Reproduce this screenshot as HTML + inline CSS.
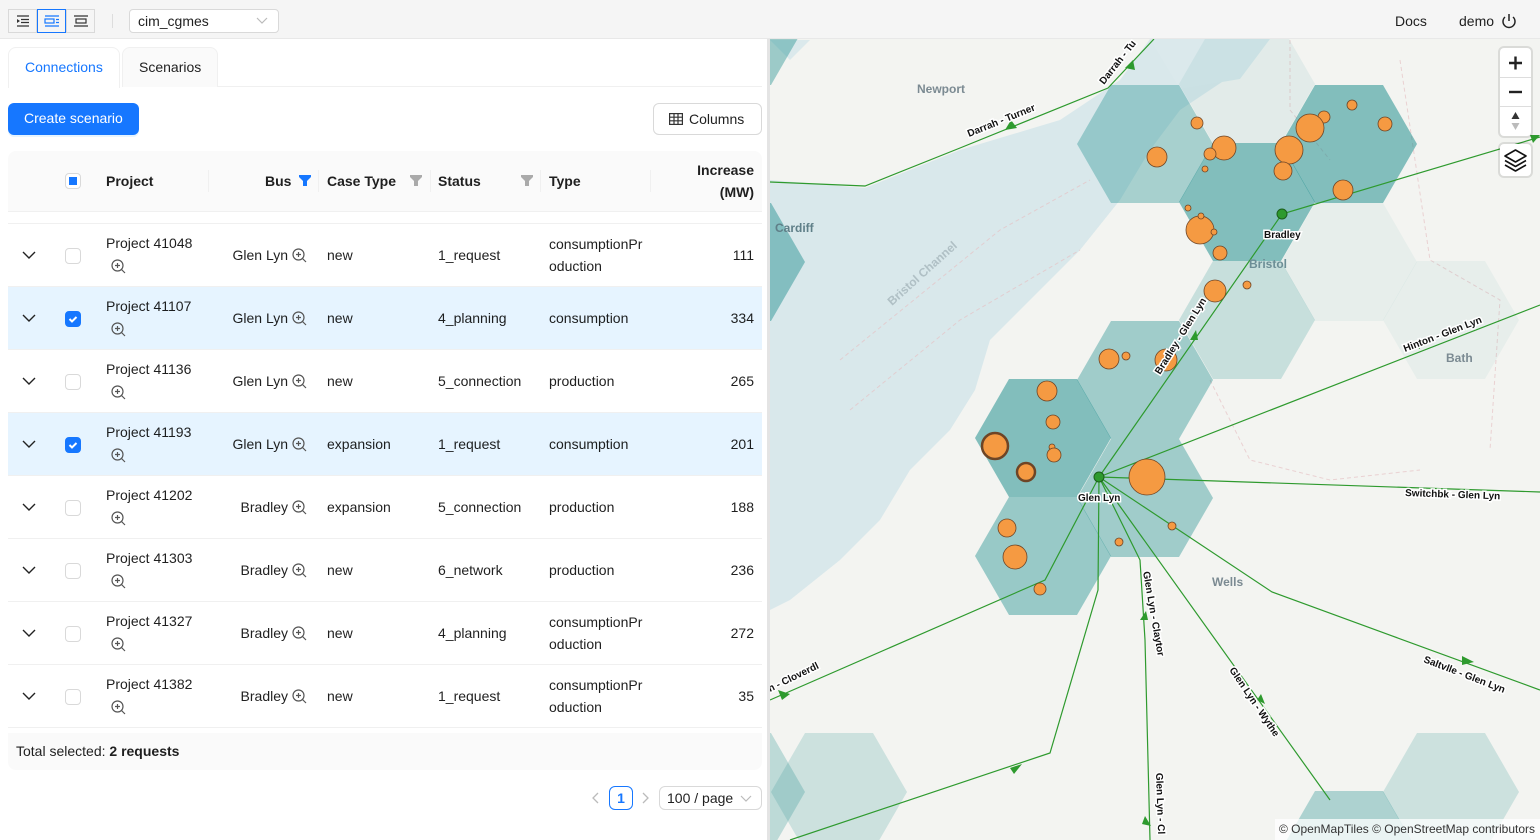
<!DOCTYPE html>
<html style="overflow:hidden"><head><meta charset="utf-8"><style>
*{box-sizing:border-box;margin:0;padding:0}
body{width:1540px;height:840px;overflow:hidden;font-family:"Liberation Sans",sans-serif;font-size:14px;color:rgba(0,0,0,.88);background:#fff;position:relative}
.top{position:absolute;left:0;top:0;width:1540px;height:39px;background:#f5f5f5;border-bottom:1px solid #e8e8e8}
.ib{position:absolute;top:9px;width:29px;height:24px;border:1px solid #d9d9d9;background:#f5f5f5}
.sel{position:absolute;left:129px;top:9px;width:150px;height:24px;border:1px solid #d9d9d9;border-radius:4px;background:#fff;padding:3px 8px;font-size:14px}
.abs{position:absolute}
.left{position:absolute;left:0;top:39px;width:768px;height:801px;background:#fff;overflow:hidden}
.tab{position:absolute;top:8px;height:40px;border:1px solid #f0f0f0;border-bottom:none;border-radius:8px 8px 0 0;padding:12px 16px;font-size:14px}
.th{position:absolute;top:112px;left:8px;width:754px;height:61px;background:#fafafa;border-radius:8px 8px 0 0;border-bottom:1px solid #f0f0f0;font-weight:bold}
.th span{position:absolute}
.dv{position:absolute;top:19px;width:1px;height:22px;background:#f0f0f0}
.row{position:absolute;left:8px;width:754px;height:63px;border-bottom:1px solid #f0f0f0}
.row.s{background:#e6f4ff}
.row span{position:absolute}
.cb{position:absolute;left:57px;top:24px;width:16px;height:16px;border:1px solid #d9d9d9;border-radius:4px;background:#fff}
.cb.on{background:#1677ff;border-color:#1677ff}
.chev{position:absolute;left:14px;top:26px}
</style></head><body>
<div class="top">
 <div class="ib" style="left:8px"><svg width="27" height="22"><g stroke="#333" stroke-width="1.2"><path d="M8 6h12M12 9.5h8M12 12.5h8M8 16h12"/></g><path d="M8 9l3 2-3 2z" fill="#333"/></svg></div>
 <div class="ib" style="left:37px;border-color:#1677ff;background:#f5f5f5"><svg width="27" height="22"><g stroke="#1677ff" stroke-width="1.2" fill="none"><path d="M7 6h14M7 16h14"/><rect x="7" y="9" width="9" height="4"/><path d="M18 9.5h3M18 12.5h3"/></g></svg></div>
 <div class="ib" style="left:66px"><svg width="27" height="22"><g stroke="#333" stroke-width="1.2" fill="none"><path d="M7 6h14M7 16h14"/><rect x="9" y="9" width="10" height="4"/></g></svg></div>
 <div class="abs" style="left:112px;top:14px;width:1px;height:14px;background:#ddd"></div>
 <div class="sel">cim_cgmes<svg class="abs" style="left:126px;top:6px" width="12" height="10"><path d="M1 2l5 5 5-5" stroke="#bbb" fill="none" stroke-width="1.2"/></svg></div>
 <div class="abs" style="left:1395px;top:13px">Docs</div>
 <div class="abs" style="left:1459px;top:13px">demo</div>
 <svg class="abs" style="left:1500px;top:12px" width="18" height="18"><path d="M5 5a6 6 0 1 0 8 0" stroke="#222" stroke-width="1.5" fill="none"/><path d="M9 2v7" stroke="#222" stroke-width="1.5"/></svg>
</div>

<div class="left">
 <div class="tab" style="left:8px;width:112px;color:#1677ff;background:#fff;height:41px;padding-top:11px">Connections</div>
 <div class="tab" style="left:122px;width:96px;background:#fafafa;padding-top:11px">Scenarios</div>
 <div class="abs" style="left:218px;top:47px;width:544px;height:1px;background:#f0f0f0"></div>
 <div class="abs" style="left:8px;top:64px;width:131px;height:32px;background:#1677ff;border-radius:6px;color:#fff;padding:7px 16px;box-shadow:0 2px 0 rgba(5,145,255,.1)">Create scenario</div>
 <div class="abs" style="left:653px;top:64px;width:109px;height:32px;border:1px solid #d9d9d9;border-radius:6px;padding:7px 0 0 15px"><svg width="14" height="12" style="vertical-align:-1px;margin-right:6px"><g stroke="#333" stroke-width="1.2" fill="none"><rect x=".6" y=".6" width="12.8" height="10.8"/><path d="M.6 4.2h12.8M.6 7.8h12.8M5 .6v10.8M9 .6v10.8"/></g></svg>Columns</div>
 <div class="th">
  <div style="position:absolute;left:57px;top:22px;width:16px;height:16px;border:1px solid #d9d9d9;border-radius:4px;background:#fff"><div style="margin:3px;width:8px;height:8px;background:#1677ff"></div></div>
  <span style="left:98px;top:22px">Project</span>
  <div class="dv" style="left:200px"></div>
  <span style="left:257px;top:22px">Bus</span>
  <svg class="abs" style="left:291px;top:24px" width="12" height="11"><path d="M0 0h12v2l-4 4v5h-4v-5l-4-4z" fill="#1677ff"/></svg>
  <div class="dv" style="left:310px"></div>
  <span style="left:319px;top:22px">Case Type</span>
  <svg class="abs" style="left:402px;top:24px" width="12" height="11"><path d="M0 0h12v2l-4 4v5h-4v-5l-4-4z" fill="#aaa"/></svg>
  <div class="dv" style="left:422px"></div>
  <span style="left:430px;top:22px">Status</span>
  <svg class="abs" style="left:513px;top:24px" width="12" height="11"><path d="M0 0h12v2l-4 4v5h-4v-5l-4-4z" fill="#aaa"/></svg>
  <div class="dv" style="left:532px"></div>
  <span style="left:541px;top:22px">Type</span>
  <div class="dv" style="left:642px"></div>
  <span style="right:8px;top:8px;text-align:right;line-height:22px">Increase<br>(MW)</span>
 </div>
 <div class="abs" style="left:8px;top:184px;width:754px;height:1px;background:#f0f0f0"></div>

 <div class="row" style="top:185px"><svg class="chev" width="14" height="10"><path d="M1 2l6 6 6-6" stroke="#222" fill="none" stroke-width="1.4"/></svg><div class="cb"></div><span style="left:98px;top:11px">Project 41048</span><svg class="abs" style="left:103px;top:35px" width="15" height="15"><circle cx="6.5" cy="6.5" r="5.5" stroke="#555" fill="none" stroke-width="1.2"/><path d="M10.5 10.5l3.5 3.5M4 6.5h5M6.5 4v5" stroke="#555" stroke-width="1.2"/></svg><span style="right:474px;top:23px">Glen Lyn</span><svg class="abs" style="left:284px;top:24px" width="15" height="15"><circle cx="6.5" cy="6.5" r="5.5" stroke="#555" fill="none" stroke-width="1.2"/><path d="M10.5 10.5l3.5 3.5M4 6.5h5M6.5 4v5" stroke="#555" stroke-width="1.2"/></svg><span style="left:319px;top:23px">new</span><span style="left:430px;top:23px">1_request</span><span style="left:541px;top:9px;line-height:22px">consumptionPr<br>oduction</span><span style="right:8px;top:23px">111</span></div>

 <div class="row s" style="top:248px"><svg class="chev" width="14" height="10"><path d="M1 2l6 6 6-6" stroke="#222" fill="none" stroke-width="1.4"/></svg><div class="cb on"><svg width="14" height="14"><path d="M3.5 7l2.5 2.5 4.5-4.5" stroke="#fff" stroke-width="2" fill="none"/></svg></div><span style="left:98px;top:11px">Project 41107</span><svg class="abs" style="left:103px;top:35px" width="15" height="15"><circle cx="6.5" cy="6.5" r="5.5" stroke="#555" fill="none" stroke-width="1.2"/><path d="M10.5 10.5l3.5 3.5M4 6.5h5M6.5 4v5" stroke="#555" stroke-width="1.2"/></svg><span style="right:474px;top:23px">Glen Lyn</span><svg class="abs" style="left:284px;top:24px" width="15" height="15"><circle cx="6.5" cy="6.5" r="5.5" stroke="#555" fill="none" stroke-width="1.2"/><path d="M10.5 10.5l3.5 3.5M4 6.5h5M6.5 4v5" stroke="#555" stroke-width="1.2"/></svg><span style="left:319px;top:23px">new</span><span style="left:430px;top:23px">4_planning</span><span style="left:541px;top:23px">consumption</span><span style="right:8px;top:23px">334</span></div>

 <div class="row" style="top:311px"><svg class="chev" width="14" height="10"><path d="M1 2l6 6 6-6" stroke="#222" fill="none" stroke-width="1.4"/></svg><div class="cb"></div><span style="left:98px;top:11px">Project 41136</span><svg class="abs" style="left:103px;top:35px" width="15" height="15"><circle cx="6.5" cy="6.5" r="5.5" stroke="#555" fill="none" stroke-width="1.2"/><path d="M10.5 10.5l3.5 3.5M4 6.5h5M6.5 4v5" stroke="#555" stroke-width="1.2"/></svg><span style="right:474px;top:23px">Glen Lyn</span><svg class="abs" style="left:284px;top:24px" width="15" height="15"><circle cx="6.5" cy="6.5" r="5.5" stroke="#555" fill="none" stroke-width="1.2"/><path d="M10.5 10.5l3.5 3.5M4 6.5h5M6.5 4v5" stroke="#555" stroke-width="1.2"/></svg><span style="left:319px;top:23px">new</span><span style="left:430px;top:23px">5_connection</span><span style="left:541px;top:23px">production</span><span style="right:8px;top:23px">265</span></div>

 <div class="row s" style="top:374px"><svg class="chev" width="14" height="10"><path d="M1 2l6 6 6-6" stroke="#222" fill="none" stroke-width="1.4"/></svg><div class="cb on"><svg width="14" height="14"><path d="M3.5 7l2.5 2.5 4.5-4.5" stroke="#fff" stroke-width="2" fill="none"/></svg></div><span style="left:98px;top:11px">Project 41193</span><svg class="abs" style="left:103px;top:35px" width="15" height="15"><circle cx="6.5" cy="6.5" r="5.5" stroke="#555" fill="none" stroke-width="1.2"/><path d="M10.5 10.5l3.5 3.5M4 6.5h5M6.5 4v5" stroke="#555" stroke-width="1.2"/></svg><span style="right:474px;top:23px">Glen Lyn</span><svg class="abs" style="left:284px;top:24px" width="15" height="15"><circle cx="6.5" cy="6.5" r="5.5" stroke="#555" fill="none" stroke-width="1.2"/><path d="M10.5 10.5l3.5 3.5M4 6.5h5M6.5 4v5" stroke="#555" stroke-width="1.2"/></svg><span style="left:319px;top:23px">expansion</span><span style="left:430px;top:23px">1_request</span><span style="left:541px;top:23px">consumption</span><span style="right:8px;top:23px">201</span></div>

 <div class="row" style="top:437px"><svg class="chev" width="14" height="10"><path d="M1 2l6 6 6-6" stroke="#222" fill="none" stroke-width="1.4"/></svg><div class="cb"></div><span style="left:98px;top:11px">Project 41202</span><svg class="abs" style="left:103px;top:35px" width="15" height="15"><circle cx="6.5" cy="6.5" r="5.5" stroke="#555" fill="none" stroke-width="1.2"/><path d="M10.5 10.5l3.5 3.5M4 6.5h5M6.5 4v5" stroke="#555" stroke-width="1.2"/></svg><span style="right:474px;top:23px">Bradley</span><svg class="abs" style="left:284px;top:24px" width="15" height="15"><circle cx="6.5" cy="6.5" r="5.5" stroke="#555" fill="none" stroke-width="1.2"/><path d="M10.5 10.5l3.5 3.5M4 6.5h5M6.5 4v5" stroke="#555" stroke-width="1.2"/></svg><span style="left:319px;top:23px">expansion</span><span style="left:430px;top:23px">5_connection</span><span style="left:541px;top:23px">production</span><span style="right:8px;top:23px">188</span></div>

 <div class="row" style="top:500px"><svg class="chev" width="14" height="10"><path d="M1 2l6 6 6-6" stroke="#222" fill="none" stroke-width="1.4"/></svg><div class="cb"></div><span style="left:98px;top:11px">Project 41303</span><svg class="abs" style="left:103px;top:35px" width="15" height="15"><circle cx="6.5" cy="6.5" r="5.5" stroke="#555" fill="none" stroke-width="1.2"/><path d="M10.5 10.5l3.5 3.5M4 6.5h5M6.5 4v5" stroke="#555" stroke-width="1.2"/></svg><span style="right:474px;top:23px">Bradley</span><svg class="abs" style="left:284px;top:24px" width="15" height="15"><circle cx="6.5" cy="6.5" r="5.5" stroke="#555" fill="none" stroke-width="1.2"/><path d="M10.5 10.5l3.5 3.5M4 6.5h5M6.5 4v5" stroke="#555" stroke-width="1.2"/></svg><span style="left:319px;top:23px">new</span><span style="left:430px;top:23px">6_network</span><span style="left:541px;top:23px">production</span><span style="right:8px;top:23px">236</span></div>

 <div class="row" style="top:563px"><svg class="chev" width="14" height="10"><path d="M1 2l6 6 6-6" stroke="#222" fill="none" stroke-width="1.4"/></svg><div class="cb"></div><span style="left:98px;top:11px">Project 41327</span><svg class="abs" style="left:103px;top:35px" width="15" height="15"><circle cx="6.5" cy="6.5" r="5.5" stroke="#555" fill="none" stroke-width="1.2"/><path d="M10.5 10.5l3.5 3.5M4 6.5h5M6.5 4v5" stroke="#555" stroke-width="1.2"/></svg><span style="right:474px;top:23px">Bradley</span><svg class="abs" style="left:284px;top:24px" width="15" height="15"><circle cx="6.5" cy="6.5" r="5.5" stroke="#555" fill="none" stroke-width="1.2"/><path d="M10.5 10.5l3.5 3.5M4 6.5h5M6.5 4v5" stroke="#555" stroke-width="1.2"/></svg><span style="left:319px;top:23px">new</span><span style="left:430px;top:23px">4_planning</span><span style="left:541px;top:9px;line-height:22px">consumptionPr<br>oduction</span><span style="right:8px;top:23px">272</span></div>

 <div class="row" style="top:626px"><svg class="chev" width="14" height="10"><path d="M1 2l6 6 6-6" stroke="#222" fill="none" stroke-width="1.4"/></svg><div class="cb"></div><span style="left:98px;top:11px">Project 41382</span><svg class="abs" style="left:103px;top:35px" width="15" height="15"><circle cx="6.5" cy="6.5" r="5.5" stroke="#555" fill="none" stroke-width="1.2"/><path d="M10.5 10.5l3.5 3.5M4 6.5h5M6.5 4v5" stroke="#555" stroke-width="1.2"/></svg><span style="right:474px;top:23px">Bradley</span><svg class="abs" style="left:284px;top:24px" width="15" height="15"><circle cx="6.5" cy="6.5" r="5.5" stroke="#555" fill="none" stroke-width="1.2"/><path d="M10.5 10.5l3.5 3.5M4 6.5h5M6.5 4v5" stroke="#555" stroke-width="1.2"/></svg><span style="left:319px;top:23px">new</span><span style="left:430px;top:23px">1_request</span><span style="left:541px;top:9px;line-height:22px">consumptionPr<br>oduction</span><span style="right:8px;top:23px">35</span></div>

 <div class="abs" style="left:8px;top:694px;width:754px;height:37px;background:#fafafa;border-radius:0 0 8px 8px;padding:10px 8px">Total selected: <b>2 requests</b></div>
 <svg class="abs" style="left:591px;top:753px" width="10" height="12"><path d="M7 1l-5 5 5 5" stroke="#bbb" fill="none" stroke-width="1.3"/></svg>
 <div class="abs" style="left:609px;top:747px;width:24px;height:24px;border:1px solid #1677ff;border-radius:6px;color:#1677ff;font-weight:bold;text-align:center;line-height:22px">1</div>
 <svg class="abs" style="left:640px;top:753px" width="10" height="12"><path d="M3 1l5 5-5 5" stroke="#bbb" fill="none" stroke-width="1.3"/></svg>
 <div class="abs" style="left:659px;top:747px;width:103px;height:24px;border:1px solid #d9d9d9;border-radius:6px;padding:3px 7px">100 / page<svg class="abs" style="left:80px;top:7px" width="12" height="10"><path d="M1 2l5 5 5-5" stroke="#bbb" fill="none" stroke-width="1.2"/></svg></div>
</div>
<div class="abs" style="left:767px;top:39px;width:3px;height:801px;background:#e4e4e4"></div>

<svg class="abs" style="left:770px;top:39px;overflow:hidden" width="770" height="801" viewBox="770 39 770 801" font-family="Liberation Sans, sans-serif">
 <rect x="770" y="39" width="770" height="801" fill="#f3f4f1"/>
 <path d="M770 180L865 188L960 150L1060 120L1120 80L1150 39L1250 39L1240 70L1180 110L1150 150L1120 200L1080 250L1030 300L990 340L975 390L950 430L910 470L880 520L840 560L790 600L770 610Z" fill="#d9e8eb"/>
 <path d="M770 40h40l-20 20zM1150 39h120l-30 40-60 10z" fill="#dbe9ec"/>
 <g fill="none" stroke="#e5c2c5" stroke-width="1" stroke-dasharray="4 3" opacity=".7">
  <path d="M840 360L1000 230L1090 180M850 410L960 320L1080 250M1290 40L1290 110L1330 160M1400 60L1430 260L1500 300L1490 450M1210 380L1250 460L1330 480L1420 470"/>
 </g>
 <g fill="#1a8c8c">
  <polygon fill-opacity=".05" points="1281,262 1315,203 1383,203 1417,262 1383,321 1315,321"/>
  <polygon fill-opacity=".05" points="1383,320 1417,261 1485,261 1519,320 1485,379 1417,379"/>
  <polygon fill-opacity=".08" points="1179,84 1213,25 1281,25 1315,84 1281,143 1213,143"/>
  <polygon fill-opacity=".35" points="1077,144 1111,85 1179,85 1213,144 1179,203 1111,203"/>
  <polygon fill-opacity=".52" points="1281,144 1315,85 1383,85 1417,144 1383,203 1315,203"/>
  <polygon fill-opacity=".52" points="1179,202 1213,143 1281,143 1315,202 1281,261 1213,261"/>
  <polygon fill-opacity=".2" points="1179,320 1213,261 1281,261 1315,320 1281,379 1213,379"/>
  <polygon fill-opacity=".38" points="1077,380 1111,321 1179,321 1213,380 1179,439 1111,439"/>
  <polygon fill-opacity=".52" points="975,438 1009,379 1077,379 1111,438 1077,497 1009,497"/>
  <polygon fill-opacity=".38" points="1077,498 1111,439 1179,439 1213,498 1179,557 1111,557"/>
  <polygon fill-opacity=".42" points="975,556 1009,497 1077,497 1111,556 1077,615 1009,615"/>
  <polygon fill-opacity=".45" points="669,262 703,203 771,203 805,262 771,321 703,321"/>
  <polygon fill-opacity=".4" points="669,26 703,-33 771,-33 805,26 771,85 703,85"/>
  <polygon fill-opacity=".18" points="1383,792 1417,733 1485,733 1519,792 1485,851 1417,851"/>
  <polygon fill-opacity=".32" points="1281,850 1315,791 1383,791 1417,850 1383,909 1315,909"/>
  <polygon fill-opacity=".18" points="771,792 805,733 873,733 907,792 873,851 805,851"/>
  <polygon fill-opacity=".25" points="669,792 703,733 771,733 805,792 771,851 703,851"/>
 </g>
 <g fill="none" stroke="#2e9a2e" stroke-width="1.2">
  <path d="M770 182L865 186L960 148L1108 88L1154 39"/>
  <path d="M1099 477L1282 214L1540 137"/>
  <path d="M1099 477L1540 305"/>
  <path d="M1099 477L1540 492"/>
  <path d="M1099 477L1272 592L1540 690"/>
  <path d="M1099 477L1330 800"/>
  <path d="M1099 477L1140 560L1145 640L1150 840"/>
  <path d="M1099 477L1098 590L1050 753L790 840"/>
  <path d="M1099 477L1045 580L770 700"/>
 </g>
 <g fill="#2e9a2e">
  <path d="M1005 130l12 -2-6-8z"/><path d="M1125 68l8 -8 2 10z"/><path d="M1410 345l10-6 0 10z"/><path d="M1465 490l10 3-10 4z"/><path d="M1462 656l12 6-12 3z"/><path d="M1257 700l8 4-4 -10z"/><path d="M1140 620l6-9 2 9z"/><path d="M1010 768l12-4-8 10z"/><path d="M778 690l12 4-8 6z"/><path d="M1145 816l6 10-9-2z"/><path d="M1190 340l6-10 2 10z"/><path d="M1530 135l10 0-7 8z"/>
 </g>
 <g fill="#f59a42" stroke="#6e4526" stroke-width=".8">
  <circle cx="1324" cy="117" r="6"/><circle cx="1352" cy="105" r="5"/><circle cx="1310" cy="128" r="14"/><circle cx="1385" cy="124" r="7"/><circle cx="1197" cy="123" r="6"/><circle cx="1224" cy="148" r="12"/><circle cx="1210" cy="154" r="6"/><circle cx="1157" cy="157" r="10"/><circle cx="1289" cy="150" r="14"/><circle cx="1283" cy="171" r="9"/><circle cx="1343" cy="190" r="10"/><circle cx="1205" cy="169" r="3"/><circle cx="1188" cy="208" r="3"/><circle cx="1200" cy="230" r="14"/><circle cx="1201" cy="216" r="3"/><circle cx="1214" cy="232" r="3"/><circle cx="1220" cy="253" r="7"/><circle cx="1215" cy="291" r="11"/><circle cx="1247" cy="285" r="4"/><circle cx="1109" cy="359" r="10"/><circle cx="1126" cy="356" r="4"/><circle cx="1166" cy="360" r="11"/><circle cx="1047" cy="391" r="10"/><circle cx="1053" cy="422" r="7"/><circle cx="1052" cy="447" r="3"/><circle cx="1054" cy="455" r="7"/><circle cx="1147" cy="477" r="18"/><circle cx="1007" cy="528" r="9"/><circle cx="1015" cy="557" r="12"/><circle cx="1172" cy="526" r="4"/><circle cx="1119" cy="542" r="4"/><circle cx="1040" cy="589" r="6"/>
  <circle cx="995" cy="446" r="13" stroke-width="2.5"/><circle cx="1026" cy="472" r="9" stroke-width="2.5"/>
 </g>
 <circle cx="1282" cy="214" r="5" fill="#2e9a2e" stroke="#1c5e1c"/>
 <circle cx="1099" cy="477" r="5" fill="#2e9a2e" stroke="#1c5e1c"/>
 <g font-size="12" fill="#7b8a92" font-weight="bold">
  <text x="917" y="93">Newport</text><text x="775" y="232" fill="#5f7f88">Cardiff</text><text x="1249" y="268" fill="#6c8e96">Bristol</text><text x="1446" y="362">Bath</text><text x="1212" y="586">Wells</text>
  <text transform="translate(892,306) rotate(-42)" fill="#b0c0c5">Bristol Channel</text>
 </g>
 <g font-size="10" font-weight="bold" fill="#111" stroke="#fff" stroke-width="3" paint-order="stroke">
  <text x="1264" y="238">Bradley</text><text x="1078" y="501">Glen Lyn</text>
  <text transform="translate(969,137) rotate(-22)">Darrah - Turner</text>
  <text transform="translate(1104,85) rotate(-52)">Darrah - Tu</text>
  <text transform="translate(1160,375) rotate(-58)">Bradley - Glen Lyn</text>
  <text transform="translate(1405,352) rotate(-21)">Hinton - Glen Lyn</text>
  <text transform="translate(1405,496) rotate(2)">Switchbk - Glen Lyn</text>
  <text transform="translate(1423,662) rotate(21)">Saltvlle - Glen Lyn</text>
  <text transform="translate(1143,572) rotate(80)">Glen Lyn - Claytor</text>
  <text transform="translate(1229,670) rotate(56)">Glen Lyn - Wythe</text>
  <text transform="translate(1156,773) rotate(88)">Glen Lyn - Cl</text>
  <text transform="translate(770,692) rotate(-26)">n - Cloverdl</text>
 </g>
 <rect x="1275" y="819" width="265" height="21" fill="#fff" fill-opacity=".75"/>
 <text x="1279" y="833" font-size="12" fill="#333">© OpenMapTiles © OpenStreetMap contributors</text>
</svg>
<div class="abs" style="left:1500px;top:48px;width:31px;height:88px;background:#fff;border-radius:4px;box-shadow:0 0 0 2px rgba(0,0,0,.1)">
 <svg width="31" height="88"><path d="M9 15h13M15.5 8.5v13" stroke="#222" stroke-width="2.4"/><path d="M9 44h13" stroke="#222" stroke-width="2.4"/><path d="M0 29.5h31M0 58.5h31" stroke="#ddd"/><path d="M15.5 64l-4 7h8z" fill="#333"/><path d="M15.5 82l-4-7h8z" fill="#bbb"/></svg>
</div>
<div class="abs" style="left:1500px;top:144px;width:31px;height:32px;background:#fff;border-radius:4px;box-shadow:0 0 0 2px rgba(0,0,0,.1)">
 <svg width="31" height="32"><g stroke="#111" stroke-width="1.6" fill="#fff" stroke-linejoin="round"><path d="M5 21l10.5 6 10.5-6"/><path d="M5 16.5l10.5 6 10.5-6"/><path d="M5 12l10.5-6 10.5 6-10.5 6z"/></g></svg>
</div>
</body></html>
